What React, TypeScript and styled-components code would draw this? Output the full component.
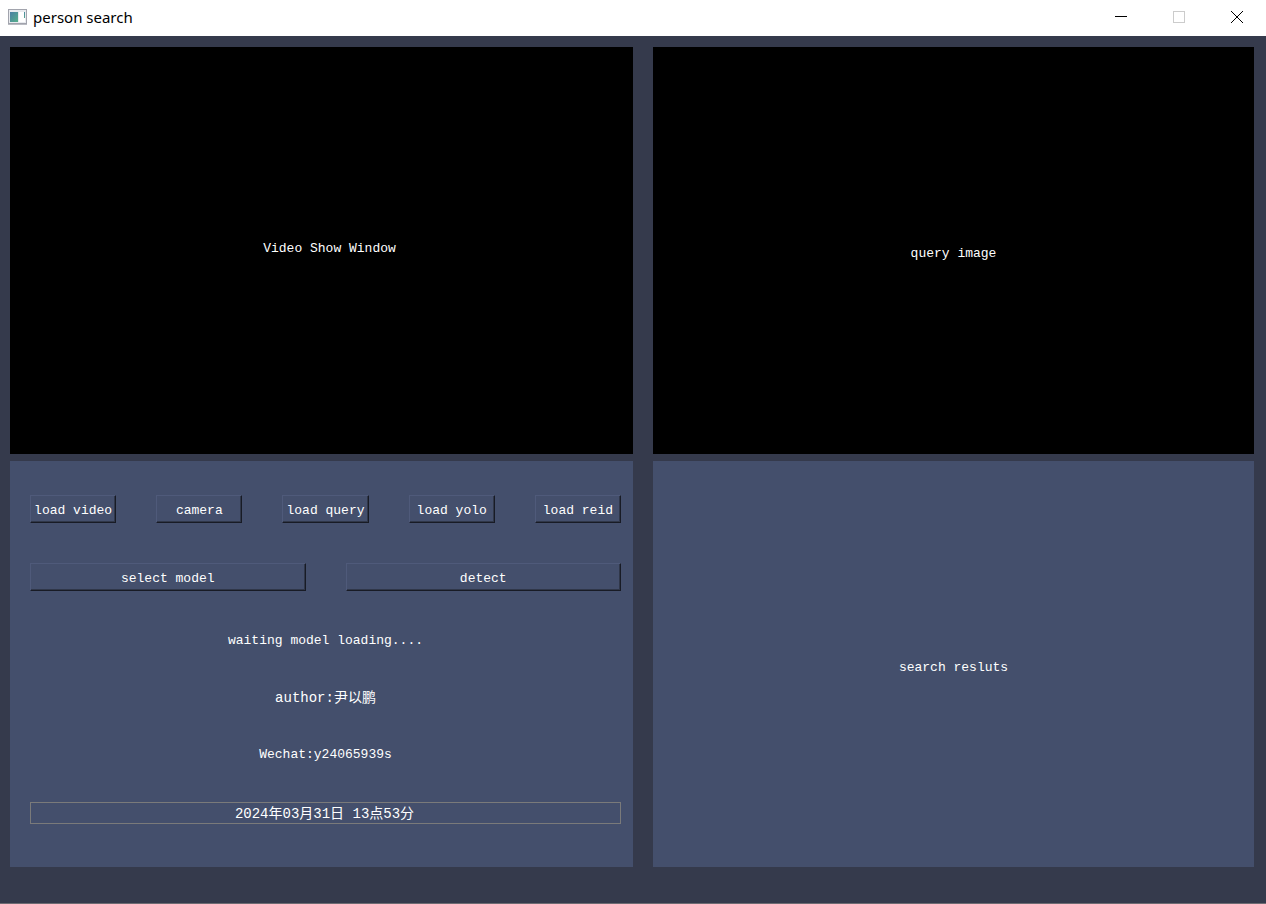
import React from "react";
import styled, { createGlobalStyle } from "styled-components";

const GlobalStyle = createGlobalStyle`
  * { box-sizing: border-box; }
  body {
    margin: 0;
    background: #353a4c;
    color: #ffffff;
    font-family: "Liberation Mono", "Noto Sans CJK SC", monospace;
    font-size: 13px;
    line-height: 20px;
  }
`;

const Window = styled.div`
  display: flex;
  flex-direction: column;
  min-height: 100vh;
  border-bottom: 1px solid #6d6b72;
`;

const TitleBar = styled.header`
  display: flex;
  align-items: center;
  height: 36px;
  padding: 0 0 2px 8px;
  background: #ffffff;
  color: #000000;
`;

const Title = styled.h1`
  flex: 1;
  margin: 0 0 0 6px;
  font: 400 15px/34px "Noto Sans", "Open Sans", sans-serif;
`;

const WindowButton = styled.button`
  display: flex;
  align-items: center;
  justify-content: center;
  width: 58px;
  height: 34px;
  padding: 0;
  border: 0;
  background: transparent;
  color: #000000;

  &:disabled { color: #cccccc; }
`;

const Content = styled.main`
  flex: 1;
  display: grid;
  grid-template-columns: 623fr 601fr;
  grid-template-rows: 407fr 406fr;
  gap: 7px 20px;
  padding: 11px 12px 36px 10px;
`;

const Screen = styled.section<{ $pad?: string }>`
  display: flex;
  align-items: center;
  justify-content: center;
  padding: ${(p) => p.$pad ?? "0"};
  background: #000000;
`;

const Results = styled(Screen)`
  background: #444f6c;
`;

const Controls = styled.section`
  display: flex;
  flex-direction: column;
  padding: 34px 12px 43px 20px;
  background: #444f6c;
`;

const ButtonRow = styled.div<{ $columns: number }>`
  display: grid;
  grid-template-columns: repeat(${(p) => p.$columns}, minmax(0, 1fr));
  gap: 40px;
  margin-bottom: 40px;
`;

const PushButton = styled.button`
  height: 28px;
  padding: 4px 0 0;
  border: 1px solid;
  border-color: #4f5a7a #181b25 #181b25 #4f5a7a;
  border-radius: 0;
  background: transparent;
  box-shadow: inset -1px -1px 0 #303749;
  color: inherit;
  font: inherit;
  white-space: nowrap;
`;

const Info = styled.div`
  flex: 1;
  display: flex;
  flex-direction: column;
  justify-content: space-between;
`;

const InfoLine = styled.p<{ $large?: boolean }>`
  margin: 0;
  text-align: center;
  font-size: ${(p) => (p.$large ? 14 : 13)}px;
  line-height: 20px;
`;

const DateField = styled.input`
  width: 100%;
  height: 22px;
  padding: 0 2px 2px 0;
  border: 1px solid #7a7a7a;
  background: transparent;
  color: inherit;
  font: inherit;
  font-size: 14px;
  text-align: center;
`;

const AppIcon = () => (
  <svg width="19" height="16" viewBox="0 0 19 16" aria-hidden="true">
    <defs>
      <linearGradient id="pane" x1="0" y1="0" x2="1" y2="1">
        <stop offset="0" stopColor="#4a7fa5" />
        <stop offset="1" stopColor="#56b08a" />
      </linearGradient>
    </defs>
    <rect x="0.5" y="0.5" width="18" height="14" fill="#e9ebef" stroke="#a2a4ad" />
    <path d="M0 15.5h19" stroke="#b9bbc2" />
    <rect x="2" y="3" width="8" height="10" fill="url(#pane)" />
    <rect x="11" y="3" width="6" height="10" fill="#ffffff" />
    <rect x="16" y="3" width="1" height="6" fill="url(#pane)" />
  </svg>
);

const actions = ["load video", "camera", "load query", "load yolo", "load reid"];

export default function App() {
  return (
    <>
      <GlobalStyle />
      <Window>
        <TitleBar>
          <AppIcon />
          <Title>person search</Title>
          <WindowButton aria-label="Minimize">
            <svg width="12" height="12" stroke="currentColor"><path d="M0 5.5h12" /></svg>
          </WindowButton>
          <WindowButton aria-label="Maximize" disabled>
            <svg width="12" height="12" stroke="currentColor" fill="none">
              <rect x="0.5" y="0.5" width="11" height="11" />
            </svg>
          </WindowButton>
          <WindowButton aria-label="Close">
            <svg width="12" height="12" stroke="currentColor"><path d="M0 0l12 12M12 0L0 12" /></svg>
          </WindowButton>
        </TitleBar>
        <Content>
          <Screen $pad="0 0 4px 16px">Video Show Window</Screen>
          <Screen $pad="6px 0 0">query image</Screen>
          <Controls>
            <ButtonRow $columns={5}>
              {actions.map((label) => (
                <PushButton key={label}>{label}</PushButton>
              ))}
            </ButtonRow>
            <ButtonRow $columns={2}>
              <PushButton>select model</PushButton>
              <PushButton>detect</PushButton>
            </ButtonRow>
            <Info>
              <InfoLine>waiting model loading....</InfoLine>
              <InfoLine $large>author:尹以鹏</InfoLine>
              <InfoLine>Wechat:y24065939s</InfoLine>
              <DateField readOnly aria-label="Current time" value="2024年03月31日 13点53分" />
            </Info>
          </Controls>
          <Results $pad="8px 0 0">search resluts</Results>
        </Content>
      </Window>
    </>
  );
}
